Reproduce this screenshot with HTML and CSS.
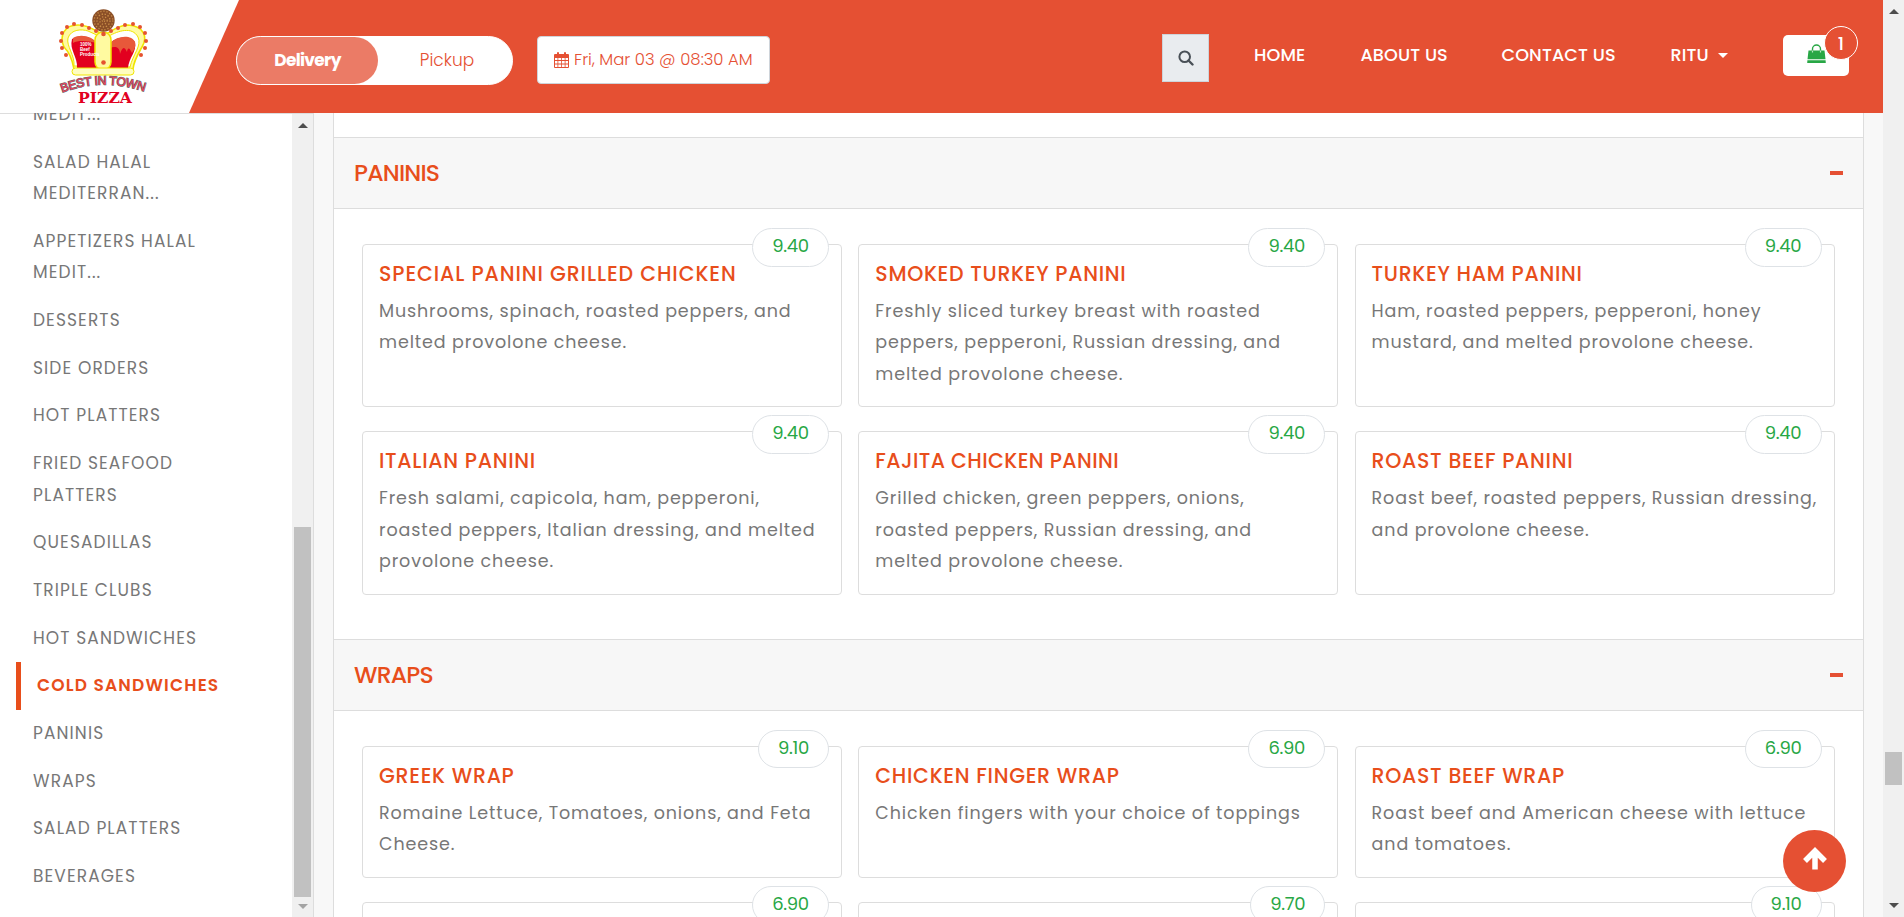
FILE: index.html
```html
<!DOCTYPE html>
<html lang="en">
<head>
<meta charset="utf-8">
<title>Best in Town Pizza</title>
<link rel="stylesheet" href="styles.css">
</head>
<body>
<div class="page">
<header class="header">
  <div class="brand">
    <svg class="logo" width="92" height="110" viewBox="0 0 92 110">
      <path d="M16 69 C14 58 11 52 6 47 C1 36 6 25 20 25 C34 25 40 34 46 34 C52 34 58 25 70 25 C86 26 90 37 84 47 C80 54 76 60 75 69 Z" fill="#fffaa0" stroke="#f0e400" stroke-width="1.6"/>
      <path d="M16 66 C17 55 8 46 10 38 C13 29 24 29 30 31 L41 36 L51 36 C60 31 74 26 80 37 C84 46 75 54 72 67 Z" fill="#fff" stroke="#f0e400"/>
      <path d="M19 68 C20 57 11 50 14 39 C22 34 34 37 39 43 L40 68 Z M51 68 L52 43 C60 36 72 35 77 42 C79 52 71 57 70 68 Z" fill="#e2001f"/>
      <path d="M15 38 C23 33 35 37 39 43 C30 41 20 40 15 43 Z M52 43 C60 35 74 35 77 42 C78 47 76 50 74 53 C72 49 70 46 69 52 C66 45 64 48 62 54 C62 46 56 46 52 48 Z" fill="#e8583a"/>
      <rect x="37" y="32" width="16" height="38" rx="8" fill="#fffaa0" stroke="#f0e400" stroke-width="1.5"/>
      <rect x="14" y="68" width="62" height="7" rx="3.500" fill="#fffdc0" stroke="#f0e400"/>
      <circle cx="45.500" cy="20.500" r="11.200" fill="#8b4f27"/>
      <g fill="none" stroke="#c98e48" stroke-width="1.300">
        <circle cx="45.500" cy="20.500" r="9.300" stroke-dasharray="1.200 1.900"/>
        <circle cx="45.500" cy="20.500" r="6.500" stroke-dasharray="1.400 1.700"/>
        <circle cx="45.500" cy="20.500" r="3.700" stroke-dasharray="1.200 1.900"/>
        <circle cx="45.500" cy="20.500" r="1.200" stroke-dasharray="1.200 1.200"/>
      </g>
      <g fill="#e5532f">
        <circle cx="8" cy="55" r="2"/><circle cx="4" cy="48" r="2"/><circle cx="3" cy="41" r="2"/><circle cx="4" cy="33" r="2"/><circle cx="9" cy="27" r="2"/><circle cx="16" cy="24" r="2"/><circle cx="24" cy="25" r="2"/><circle cx="31" cy="28" r="2"/><circle cx="38" cy="31" r="2"/><circle cx="45.500" cy="34" r="2.300"/><circle cx="53" cy="31" r="2"/><circle cx="60" cy="28" r="2"/><circle cx="67" cy="25" r="2"/><circle cx="75" cy="24" r="2"/><circle cx="82" cy="27" r="2"/><circle cx="87" cy="33" r="2"/><circle cx="88" cy="41" r="2"/><circle cx="87" cy="48" r="2"/><circle cx="83" cy="55" r="2"/><circle cx="45.500" cy="62.500" r="2.300"/>
      </g>
      <g class="logo-note"><text x="22" y="46">100%</text><text x="22" y="50.500">Beef</text><text x="22" y="55.500">Products</text></g>
      <path id="arc" d="M4 92.500 Q45.500 77 89 92.500" fill="none"/>
      <text class="logo-arc"><textPath href="#arc">BEST IN TOWN</textPath></text>
      <text class="logo-pizza" x="20" y="103" textLength="54" lengthAdjust="spacingAndGlyphs">PIZZA</text>
    </svg>
  </div>
  <div class="controls">
    <div class="toggle"><span class="toggle-on">Delivery</span><span class="toggle-off">Pickup</span></div>
    <div class="date">
      <svg width="15" height="16" viewBox="0 0 15 16"><path fill="#e55033" fill-rule="evenodd" d="M1 2h2V1q0-1 1-1t1 1v1h5V1q0-1 1-1t1 1v1h2q1 0 1 1v12q0 1-1 1H1q-1 0-1-1V3q0-1 1-1zM1 6v2h2.500V6zM4.300 6v2h2.800V6zM7.900 6v2h2.800V6zM11.500 6v2H14V6zM1 9v2.500h2.500V9zM4.300 9v2.500h2.800V9zM7.900 9v2.500h2.800V9zM11.500 9v2.500H14V9zM1 12.500V15h2.500v-2.500zM4.300 12.500V15h2.800v-2.500zM7.900 12.500V15h2.800v-2.500zM11.500 12.500V15H14v-2.500z"/></svg>
      <span>Fri, Mar 03 @ 08:30 AM</span>
    </div>
  </div>
  <div class="search"><svg width="16" height="16" viewBox="0 0 16 16"><circle cx="6.700" cy="6.700" r="5.300" fill="none" stroke="#495057" stroke-width="2"/><path d="M10.500 10.500l4 4" stroke="#495057" stroke-width="2.400" stroke-linecap="round"/></svg></div>
  <nav class="nav"><a class="n-home">HOME</a><a class="n-about">ABOUT US</a><a class="n-contact">CONTACT US</a><a class="n-user">RITU<i class="caret"></i></a></nav>
  <div class="cart">
    <svg width="19" height="20" viewBox="0 0 19 20"><path d="M5.500 8V5a4 4 0 0 1 8 0v3" fill="none" stroke="#28a745" stroke-width="1.400"/><path d="M1.500 6.500h16l1 8.700H.5zM.4 16.200h18.200l.2 2.800H.2z" fill="#28a745"/><path d="M5.500 6.500v2m8-2v2" stroke="#b9e4c3" stroke-width="1.200"/></svg>
    <span class="badge">1</span>
  </div>
</header>
<div class="body">
  <aside class="sidebar">
    <ul class="menu">
      <li>APPETIZERS HALAL<br>MEDIT...</li>
      <li>SALAD HALAL<br>MEDITERRAN...</li>
      <li>APPETIZERS HALAL<br>MEDIT...</li>
      <li>DESSERTS</li><li>SIDE ORDERS</li><li>HOT PLATTERS</li>
      <li>FRIED SEAFOOD<br>PLATTERS</li>
      <li>QUESADILLAS</li><li>TRIPLE CLUBS</li><li>HOT SANDWICHES</li>
      <li class="active">COLD SANDWICHES</li>
      <li>PANINIS</li><li>WRAPS</li><li>SALAD PLATTERS</li><li>BEVERAGES</li>
    </ul>
    <div class="bar side-bar"><i class="up"></i><b></b><i class="down"></i></div>
  </aside>
  <main class="main">
    <section>
      <h2>PANINIS<i></i></h2>
      <div class="grid">
        <article><span class="price">9.40</span><h3 class="wide">SPECIAL PANINI GRILLED CHICKEN</h3><p>Mushrooms, spinach, roasted peppers, and<br>melted provolone cheese.</p></article>
        <article><span class="price">9.40</span><h3>SMOKED TURKEY PANINI</h3><p>Freshly sliced turkey breast with roasted<br>peppers, pepperoni, Russian dressing, and<br>melted provolone cheese.</p></article>
        <article><span class="price">9.40</span><h3>TURKEY HAM PANINI</h3><p>Ham, roasted peppers, pepperoni, honey<br>mustard, and melted provolone cheese.</p></article>
        <article><span class="price">9.40</span><h3>ITALIAN PANINI</h3><p>Fresh salami, capicola, ham, pepperoni,<br>roasted peppers, Italian dressing, and melted<br>provolone cheese.</p></article>
        <article><span class="price">9.40</span><h3 class="tight">FAJITA CHICKEN PANINI</h3><p>Grilled chicken, green peppers, onions,<br>roasted peppers, Russian dressing, and<br>melted provolone cheese.</p></article>
        <article><span class="price">9.40</span><h3>ROAST BEEF PANINI</h3><p>Roast beef, roasted peppers, Russian dressing,<br>and provolone cheese.</p></article>
      </div>
    </section>
    <section>
      <h2>WRAPS<i></i></h2>
      <div class="grid">
        <article><span class="price p71">9.10</span><h3>GREEK WRAP</h3><p>Romaine Lettuce, Tomatoes, onions, and Feta<br>Cheese.</p></article>
        <article><span class="price">6.90</span><h3>CHICKEN FINGER WRAP</h3><p>Chicken fingers with your choice of toppings</p></article>
        <article><span class="price">6.90</span><h3>ROAST BEEF WRAP</h3><p>Roast beef and American cheese with lettuce<br>and tomatoes.</p></article>
        <article><span class="price">6.90</span></article>
        <article><span class="price p74">9.70</span></article>
        <article><span class="price p71">9.10</span></article>
      </div>
    </section>
  </main>
</div>
</div>
<div class="bar page-bar"><i class="up"></i><b></b><i class="down dark"></i></div>
<div class="to-top"><svg width="26" height="24" viewBox="0 0 26 24"><path d="M13 4v18.500M3 14L13 4l10 10" fill="none" stroke="#fff" stroke-width="5.500"/></svg></div>
</body>
</html>
```
FILE: styles.css
```css
* { box-sizing: border-box; }
body { margin: 0; height: 917px; overflow: hidden; display: flex; font-family: Poppins, "Open Sans", sans-serif; color: #777; background: #fff; }
.page { width: 1883px; height: 917px; display: flex; flex-direction: column; }

.header { height: 113px; flex: none; display: flex; align-items: flex-start; background: #e55033; color: #fff; }
.brand { width: 239px; height: 113px; flex: none; background: #fff; clip-path: polygon(0 0, 100% 0, 189px 100%, 0 100%); padding-left: 58px; }
.logo { display: block; overflow: visible; }
.logo-note { font: bold 4.500px "Liberation Sans", sans-serif; fill: #fff; }
.logo-arc { font: 12.200px "Liberation Sans", sans-serif; letter-spacing: -.3px; fill: #f0405c; stroke: #666; stroke-width: 1.200px; paint-order: stroke; }
.logo-pizza { font: bold 15.500px "DejaVu Serif", serif; fill: #e2001f; }
.controls { display: flex; padding-top: 36px; width: 923px; margin-left: -3px; gap: 24px; }
.toggle { width: 277px; height: 49px; border: 1px solid #fff; border-radius: 25px; background: #fff; display: flex; line-height: 47px; font-size: 17px; text-align: center; }
.toggle-on { width: 141px; flex: none; border-radius: 24px; background: #eb7b66; color: #fff; font-weight: 700; letter-spacing: -.7px; }
.toggle-off { width: 138px; flex: none; color: #e55033; font-weight: 300; }
.date { width: 233px; height: 48px; border: 1px solid #ced4da; border-radius: 4px; background: #fff; color: #e55033; display: flex; align-items: center; padding-left: 16px; gap: 5px; font-size: 16.500px; font-weight: 300; white-space: nowrap; }
.date span { margin-top: -2px; }
.search { width: 47px; height: 48px; flex: none; margin: 34px 0 0 3px; background: #e9ecef; border: 1px solid #ced4da; display: flex; align-items: center; justify-content: center; }
.nav { display: flex; padding: 39px 0 0 45px; width: 574px; flex: none; font-weight: 500; font-size: 17.600px; line-height: 32px; letter-spacing: .1px; white-space: nowrap; }
.n-home { width: 106.500px; } .n-about { width: 141px; } .n-contact { width: 169px; }
.n-user { display: flex; align-items: center; gap: 9px; }
.caret { border: 5px solid transparent; border-top-color: #fff; border-bottom: 0; }
.cart { width: 66px; height: 41px; flex: none; margin-top: 35px; border-radius: 5px; background: #fff; position: relative; padding: 9px 0 0 24px; }
.badge { position: absolute; left: 41px; top: -9px; width: 34px; height: 34px; border: 1px solid #fff; border-radius: 50%; background: #e55033; font-size: 18px; font-weight: 500; line-height: 34px; text-align: center; }

.body { display: flex; height: 804px; overflow: hidden; background: #f8f8f8; }
.sidebar { width: 314px; flex: none; display: flex; justify-content: space-between; background: #fff; border-top: 1px solid #ddd; border-right: 1px solid #ddd; }
.menu { list-style: none; margin: -54.500px 0 0; padding: 0 0 0 16px; font-size: 17px; line-height: 31.500px; letter-spacing: 1.100px; white-space: nowrap; }
.menu li { padding: 8px 17px 8.200px; }
.menu .active { border-left: 5px solid #e84e1b; padding-left: 16px; color: #e84e1b; font-weight: 600; letter-spacing: 1.200px; }
.bar { width: 21px; background: #f0f0f0; display: flex; flex-direction: column; align-items: center; flex: none; }
.bar b { width: 17px; background: #c1c1c1; }
.up { border: 5px solid transparent; border-top: 0; border-bottom-color: #4d4d4d; }
.down { border: 5px solid transparent; border-bottom: 0; border-top-color: #a3a3a3; margin-top: auto; }
.down.dark { border-top-color: #4d4d4d; }
.side-bar { padding: 9px 0 8px; }
.side-bar b { margin-top: 399px; height: 370px; }
.page-bar { padding: 9px 0 9px; height: 917px; }
.page-bar b { margin-top: 738px; height: 33px; }

.main { margin-left: 19px; width: 1531px; height: 860px; flex: none; border: solid #ddd; border-width: 0 1px; background: #fff; padding-top: 24px; }
h2 { margin: 0; height: 72px; border: solid #ddd; border-width: 1px 0; background: #f7f7f7; color: #e84e1b; font-size: 23.500px; font-weight: 500; letter-spacing: -.8px; padding: 0 20px; display: flex; align-items: center; justify-content: space-between; line-height: 68px; }
h2::first-line { line-height: 66px; }
h2 i { width: 13px; height: 4px; background: #e55033; }
.grid { display: grid; grid-template-columns: repeat(3, 480px); gap: 24px 16.300px; padding: 35px 0 44px 28px; }
article { position: relative; border: 1px solid #ddd; border-radius: 4px; padding: 14px 16px 16.100px; min-height: 132px; }
h3 { margin: 0 0 7px; font-size: 20.500px; font-weight: 500; line-height: 30px; color: #e84e1b; letter-spacing: .7px; white-space: nowrap; }
.wide { letter-spacing: .9px; }
.tight { letter-spacing: .4px; }
p { margin: 0; font-size: 17.500px; line-height: 31.400px; letter-spacing: .88px; white-space: nowrap; }
.price { position: absolute; right: 12px; top: -17px; width: 77px; height: 38.500px; border: 1px solid #dee2e6; border-radius: 20px; background: #fff; color: #28a745; font-size: 18px; line-height: 34.500px; text-align: center; letter-spacing: -.3px; }
.p71 { width: 71px; } .p74 { width: 75px; }
.to-top { position: absolute; left: 1783px; top: 830px; width: 63px; height: 62px; border-radius: 50%; background: #e55033; display: flex; align-items: center; justify-content: center; padding-bottom: 5px; }
```
